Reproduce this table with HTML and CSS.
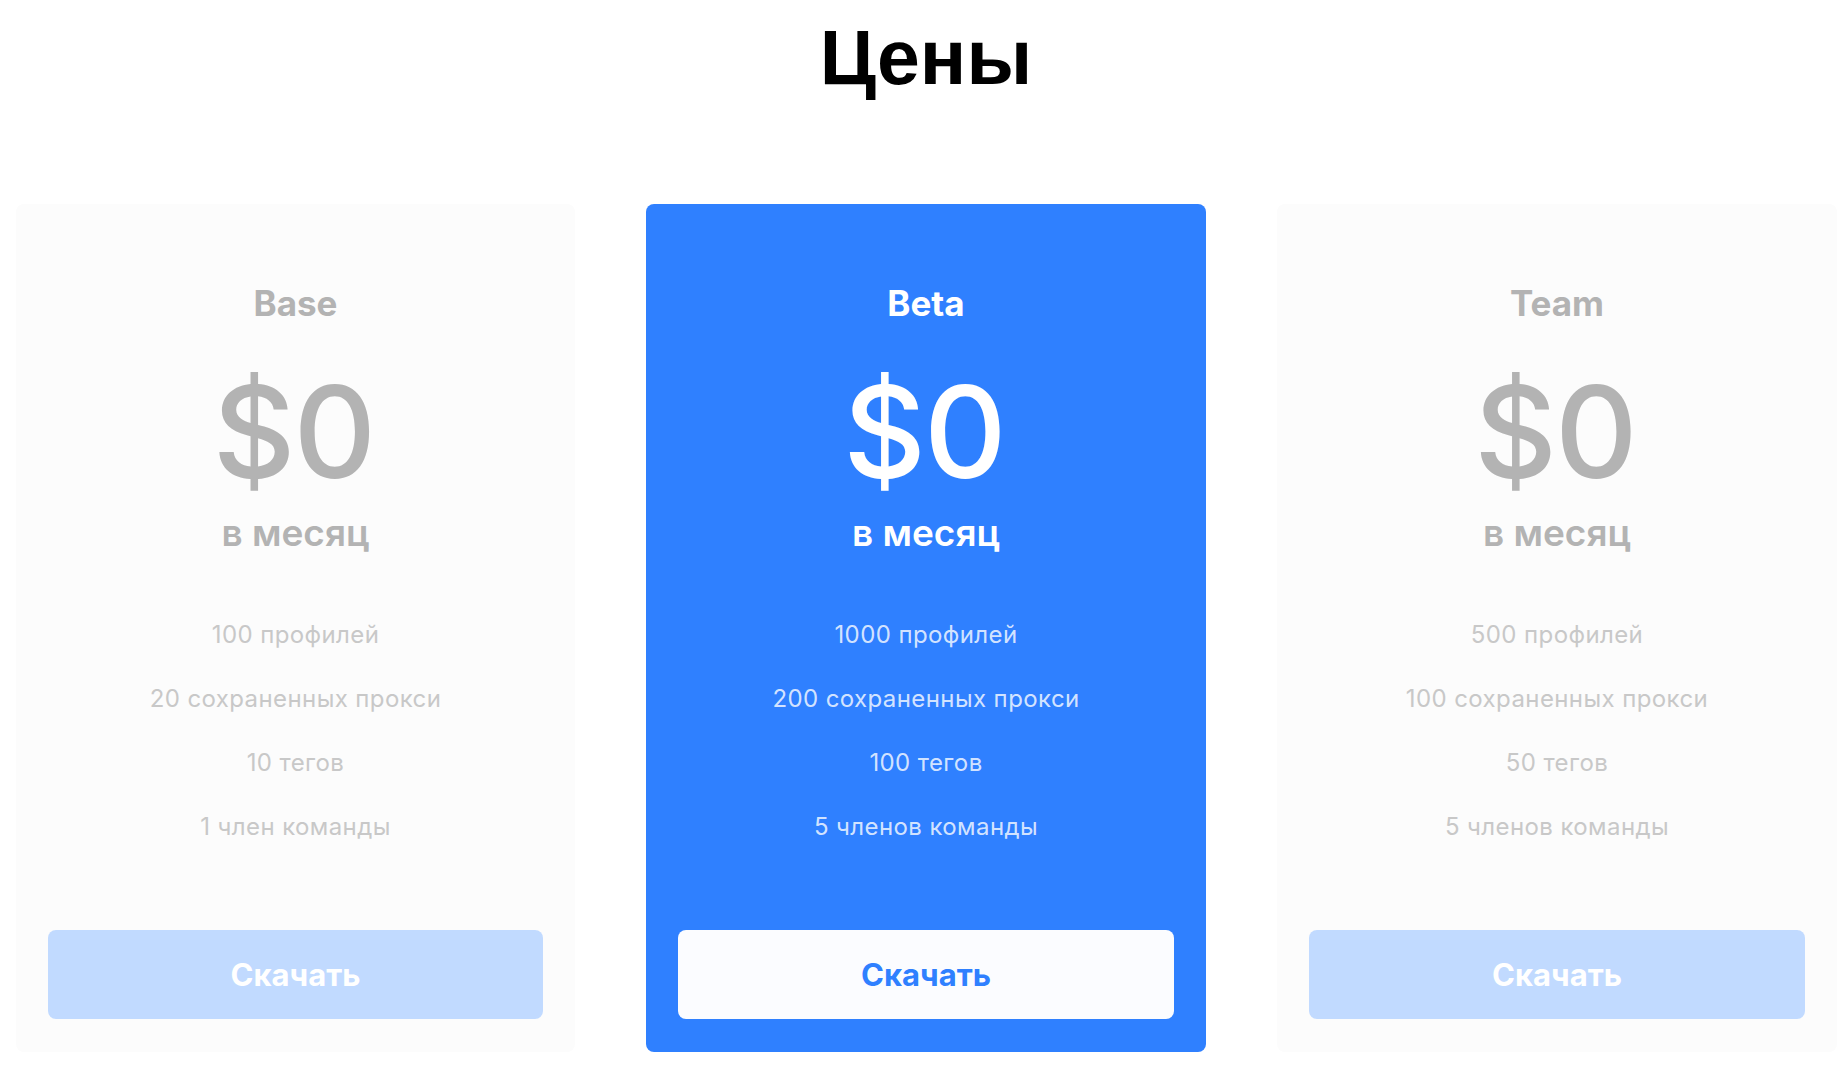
FILE: index.html
```html
<!DOCTYPE html>
<html lang="ru">
<head>
<meta charset="utf-8">
<title>Цены</title>
<link rel="stylesheet" href="styles.css">
</head>
<body>
<main class="pricing">
  <h1 class="pricing-title">Цены</h1>
  <div class="plans">
    <section class="plan">
      <h2 class="plan-name">Base</h2>
      <div class="plan-price">$0</div>
      <div class="plan-period">в месяц</div>
      <ul class="plan-features">
        <li>100 профилей</li>
        <li>20 сохраненных прокси</li>
        <li>10 тегов</li>
        <li>1 член команды</li>
      </ul>
      <a class="plan-button" href="#">Скачать</a>
    </section>
    <section class="plan plan-featured">
      <h2 class="plan-name">Beta</h2>
      <div class="plan-price">$0</div>
      <div class="plan-period">в месяц</div>
      <ul class="plan-features">
        <li>1000 профилей</li>
        <li>200 сохраненных прокси</li>
        <li>100 тегов</li>
        <li>5 членов команды</li>
      </ul>
      <a class="plan-button" href="#">Скачать</a>
    </section>
    <section class="plan">
      <h2 class="plan-name">Team</h2>
      <div class="plan-price">$0</div>
      <div class="plan-period">в месяц</div>
      <ul class="plan-features">
        <li>500 профилей</li>
        <li>100 сохраненных прокси</li>
        <li>50 тегов</li>
        <li>5 членов команды</li>
      </ul>
      <a class="plan-button" href="#">Скачать</a>
    </section>
  </div>
</main>
</body>
</html>
```

FILE: styles.css
```css
html, body {
  margin: 0;
  padding: 0;
  background: #ffffff;
}

body {
  font-family: Inter, "Noto Sans", sans-serif;
}

.pricing {
  padding: 19px 12px 0 16px;
}

.pricing-title {
  margin: 0;
  font-family: "Liberation Sans", Arial, sans-serif;
  font-weight: 700;
  font-size: 77px;
  line-height: 76px;
  text-align: center;
  color: #000000;
}

.plans {
  margin-top: 109px;
  display: grid;
  grid-template-columns: 559px 560px 560px;
  column-gap: 71px;
}

.plan {
  background: #fcfcfc;
  border-radius: 8px;
  padding: 77px 32px 33px;
  display: flex;
  flex-direction: column;
  align-items: stretch;
  text-align: center;
  color: #b3b3b3;
}

.plan-name {
  margin: 0;
  font-size: 35px;
  line-height: 44px;
  font-weight: 700;
}

.plan-price {
  margin-top: 43px;
  font-size: 128px;
  line-height: 128px;
  font-weight: 500;
  letter-spacing: -2px;
  padding-right: 4px;
}

.plan-period {
  margin-top: 13px;
  font-size: 37px;
  line-height: 48px;
  font-weight: 600;
}

.plan-features {
  list-style: none;
  margin: 46px 0 0;
  padding: 0;
  font-size: 24px;
  line-height: 64px;
  font-weight: 400;
  letter-spacing: 0.4px;
  color: #c8c8c8;
}

.plan-button {
  margin-top: 71px;
  height: 89px;
  border-radius: 8px;
  background: #c1daff;
  color: #ffffff;
  font-size: 31px;
  font-weight: 700;
  text-decoration: none;
  display: flex;
  align-items: center;
  justify-content: center;
}

.plan-featured {
  background: #2f80ff;
  color: #ffffff;
}

.plan-featured .plan-features {
  color: rgba(255, 255, 255, 0.8);
}

.plan-featured .plan-button {
  background: #fbfcff;
  color: #2f80ff;
}
```
